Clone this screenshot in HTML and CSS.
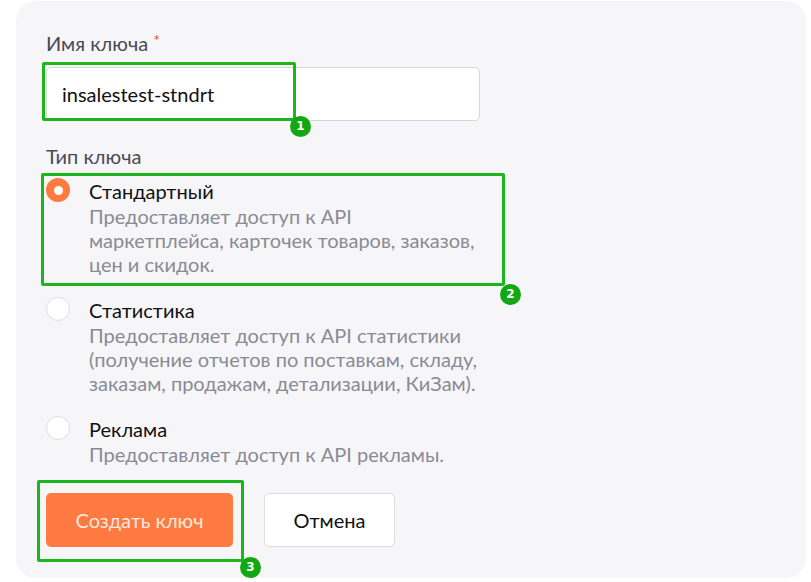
FILE: index.html
```html
<!DOCTYPE html>
<html lang="ru">
<head>
<meta charset="utf-8">
<title>Создание ключа</title>
<link rel="stylesheet" href="styles.css">
</head>
<body>
<div class="panel">
  <div class="form">
    <div class="label">Имя ключа <span class="req">*</span></div>
    <div class="input">insalestest-stndrt</div>

    <div class="label type-label">Тип ключа</div>
    <div class="options">
      <div class="option">
        <span class="radio checked"></span>
        <div class="option-text">
          <div class="option-title">Стандартный</div>
          <div class="option-desc">Предоставляет доступ к API<br>маркетплейса, карточек товаров, заказов, цен и скидок.</div>
        </div>
      </div>
      <div class="option">
        <span class="radio"></span>
        <div class="option-text">
          <div class="option-title">Статистика</div>
          <div class="option-desc">Предоставляет доступ к API статистики (получение отчетов по поставкам, складу, заказам, продажам, детализации, КиЗам).</div>
        </div>
      </div>
      <div class="option">
        <span class="radio"></span>
        <div class="option-text">
          <div class="option-title">Реклама</div>
          <div class="option-desc">Предоставляет доступ к API рекламы.</div>
        </div>
      </div>
    </div>

    <div class="actions">
      <button class="btn btn-primary">Создать ключ</button>
      <button class="btn btn-secondary">Отмена</button>
    </div>
  </div>

  <div class="mark mark-1"></div>
  <div class="badge badge-1">1</div>
  <div class="mark mark-2"></div>
  <div class="badge badge-2">2</div>
  <div class="mark mark-3"></div>
  <div class="badge badge-3">3</div>
</div>
</body>
</html>
```

FILE: styles.css
```css
html, body {
  margin: 0;
  padding: 0;
  background: #ffffff;
}

body {
  font-family: Lato, "Open Sans", "Liberation Sans", sans-serif;
  color: #111111;
}

.panel {
  position: relative;
  box-sizing: border-box;
  margin: 1px 0 0 16px;
  width: 790px;
  height: 577px;
  padding: 30px 30px 0;
  background: #f6f6f8;
  border-radius: 20px;
}

.form {
  width: 434px;
}

.label {
  font-size: 20px;
  line-height: 24px;
  color: #4a4a55;
}

.req {
  color: #f0505a;
  font-size: 16px;
  vertical-align: top;
  line-height: 18px;
}

.input {
  box-sizing: border-box;
  margin-top: 12px;
  height: 54px;
  display: flex;
  align-items: center;
  padding-left: 15px;
  background: #ffffff;
  border: 1px solid #d6d6da;
  border-radius: 5px;
  font-size: 20px;
  color: #111111;
}

.type-label {
  margin-top: 23px;
}

.options {
  margin-top: 10px;
  display: flex;
  flex-direction: column;
  gap: 21px;
}

.option {
  display: flex;
  align-items: flex-start;
  gap: 19px;
}

.radio {
  flex: none;
  box-sizing: border-box;
  margin-top: 0;
  width: 24px;
  height: 24px;
  border-radius: 50%;
  background: #ffffff;
  border: 1px solid #dedee2;
  display: flex;
  align-items: center;
  justify-content: center;
}

.radio.checked {
  background: #ff7a40;
  border: none;
}

.radio.checked::after {
  content: "";
  width: 9px;
  height: 9px;
  border-radius: 50%;
  background: #ffffff;
}

.option-text {
  width: 391px;
}

.option-title {
  font-size: 20px;
  line-height: 26px;
  color: #111111;
}

.option-desc {
  font-size: 20px;
  line-height: 24px;
  color: #8a8a94;
}

.actions {
  margin-top: 27px;
  display: flex;
  gap: 31px;
}

.btn {
  box-sizing: border-box;
  height: 54px;
  border-radius: 5px;
  font-family: inherit;
  font-size: 20px;
  cursor: pointer;
}

.btn-primary {
  width: 187px;
  background: #ff7a40;
  border: none;
  color: #fde8df;
}

.btn-secondary {
  width: 131px;
  background: #ffffff;
  border: 1px solid #dcdce0;
  color: #111111;
}

.mark {
  position: absolute;
  box-sizing: border-box;
  border: 3px solid #1cb51c;
  border-radius: 2px;
}

.mark-1 { left: 26px; top: 61px; width: 254px; height: 59px; }
.mark-2 { left: 25px; top: 172px; width: 464px; height: 113px; }
.mark-3 { left: 21px; top: 479px; width: 207px; height: 82px; }

.badge {
  position: absolute;
  width: 21px;
  height: 21px;
  border-radius: 50%;
  background: #12a812;
  color: #ffffff;
  font-family: "DejaVu Sans", sans-serif;
  font-weight: bold;
  font-size: 12px;
  line-height: 21px;
  text-align: center;
}

.badge-1 { left: 274px; top: 115px; }
.badge-2 { left: 484px; top: 283px; }
.badge-3 { left: 224px; top: 556px; }
```
